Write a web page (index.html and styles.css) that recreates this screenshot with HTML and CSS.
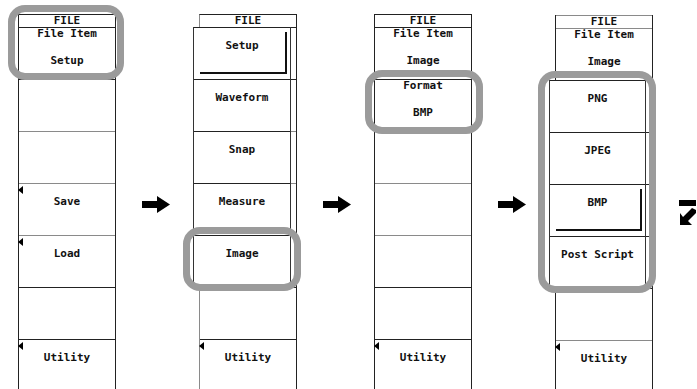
FILE: index.html
```html
<!DOCTYPE html>
<html>
  <head>
    <title>FILE menu - Image format</title>
    <link rel="stylesheet" href="styles.css">
  </head>
  <body>
    <div class="stage">
      <!-- step 1: top FILE menu -->
      <div class="panel">
        <div class="head">FILE</div>
        <div class="cell pair"><span>File Item</span><span>Setup</span></div>
        <div class="cell"></div>
        <div class="cell soft"></div>
        <div class="cell soft mark">Save</div>
        <div class="cell soft mark">Load</div>
        <div class="cell"></div>
        <div class="cell mark">Utility</div>
        <div class="ring ring-1"></div>
      </div>

      <div class="link link-wide">
        <svg class="arrow" width="28" height="17" viewBox="0 0 28 17">
          <rect x="0" y="5" width="17" height="7" fill="#000" />
          <polygon points="15,0 28,8.5 15,17" fill="#000" />
        </svg>
      </div>

      <!-- step 2: file item popup -->
      <div class="panel dim">
        <div class="head">FILE</div>
        <div class="cell"></div>
        <div class="cell"></div>
        <div class="cell soft"></div>
        <div class="cell soft"></div>
        <div class="cell soft"></div>
        <div class="cell"></div>
        <div class="cell mark">Utility</div>
        <div class="popup popup-items">
          <div class="cell pressed">Setup</div>
          <div class="cell">Waveform</div>
          <div class="cell">Snap</div>
          <div class="cell">Measure</div>
          <div class="cell">Image</div>
        </div>
        <div class="ring ring-2"></div>
      </div>

      <div class="link link-narrow">
        <svg class="arrow" width="28" height="17" viewBox="0 0 28 17">
          <rect x="0" y="5" width="17" height="7" fill="#000" />
          <polygon points="15,0 28,8.5 15,17" fill="#000" />
        </svg>
      </div>

      <!-- step 3: image menu -->
      <div class="panel">
        <div class="head">FILE</div>
        <div class="cell pair"><span>File Item</span><span>Image</span></div>
        <div class="cell pair"><span>Format</span><span>BMP</span></div>
        <div class="cell soft"></div>
        <div class="cell soft"></div>
        <div class="cell soft"></div>
        <div class="cell"></div>
        <div class="cell mark">Utility</div>
        <div class="ring ring-3"></div>
      </div>

      <div class="link link-wide">
        <svg class="arrow" width="28" height="17" viewBox="0 0 28 17">
          <rect x="0" y="5" width="17" height="7" fill="#000" />
          <polygon points="15,0 28,8.5 15,17" fill="#000" />
        </svg>
      </div>

      <!-- step 4: format popup -->
      <div class="panel low">
        <div class="head soft-head">FILE</div>
        <div class="cell pair soft"><span>File Item</span><span>Image</span></div>
        <div class="cell"></div>
        <div class="cell"></div>
        <div class="cell"></div>
        <div class="cell"></div>
        <div class="cell"></div>
        <div class="cell soft mark">Utility</div>
        <div class="popup popup-formats">
          <div class="cell">PNG</div>
          <div class="cell">JPEG</div>
          <div class="cell pressed">BMP</div>
          <div class="cell">Post Script</div>
        </div>
        <div class="ring ring-4"></div>
      </div>

      <div class="tail">
        <svg width="17" height="26" viewBox="0 0 17 26">
          <rect x="0" y="0" width="17" height="6" fill="#000" />
          <polygon points="17,10 13,8 4,17 1,13 1,25 13,25 9,21 17,13" fill="#000" />
        </svg>
      </div>
    </div>
  </body>
</html>
```

FILE: styles.css
```css
body {
  margin: 0;
  height: 389px;
  overflow: hidden;
  background-color: #fff;
  color: #111;
  font-family: "DejaVu Sans Mono", "Liberation Mono", monospace;
  font-size: 11px;
  font-weight: bold;
}

.stage {
  display: flex;
  align-items: flex-start;
  padding: 14px 0 0 18px;
}

.panel {
  position: relative;
  flex: none;
  width: 98px;
  box-sizing: border-box;
  border: 1px solid #222;
  border-bottom: none;
  background-color: #fff;
}

.panel.dim {
  border-left-color: #8a8a8a;
}

.panel.low {
  margin-top: 1px;
}

.head {
  height: 12px;
  line-height: 12px;
  text-align: center;
}

.soft-head {
  box-shadow: 0 -1px 0 #8a8a8a;
}

.cell {
  position: relative;
  height: 52px;
  box-sizing: border-box;
  border-top: 1px solid #222;
  padding-top: 12px;
  line-height: 12px;
  text-align: center;
  white-space: nowrap;
}

.cell.soft {
  border-top-color: #8a8a8a;
}

.cell.pair {
  display: flex;
  flex-direction: column;
  align-items: center;
  gap: 15px;
  padding-top: 0;
}

/* small soft-key marker in the top-left corner */
.cell.mark::before {
  content: "";
  position: absolute;
  left: -1px;
  top: 2px;
  border-right: 5px solid #000;
  border-top: 4px solid transparent;
  border-bottom: 4px solid transparent;
}

.cell.pressed::after {
  content: "";
  position: absolute;
  left: 6px;
  top: 4px;
  right: 3px;
  bottom: 5px;
  border-right: 2px solid #111;
  border-bottom: 2px solid #111;
}

.popup {
  position: absolute;
  box-sizing: border-box;
  border: 1px solid #333;
  border-top: none;
  background-color: #fff;
  z-index: 1;
}

.popup-items {
  left: -7px;
  top: 12px;
  width: 98px;
}

.popup-formats {
  left: -7px;
  top: 64px;
  width: 97px;
}

.ring {
  position: absolute;
  box-sizing: border-box;
  border: 7px solid #9b9b9b;
  border-radius: 17px;
  z-index: 2;
}

.ring-1 {
  left: -11px;
  top: -10px;
  width: 116px;
  height: 75px;
}

.ring-2 {
  left: -17px;
  top: 212px;
  width: 118px;
  height: 64px;
}

.ring-3 {
  left: -10px;
  top: 55px;
  width: 118px;
  height: 64px;
}

.ring-4 {
  left: -18px;
  top: 55px;
  width: 118px;
  height: 222px;
}

.link {
  flex: none;
  box-sizing: border-box;
  padding-left: 26px;
}

.link-wide {
  width: 83px;
}

.link-narrow {
  width: 77px;
}

.arrow {
  display: block;
  margin-top: 182px;
}

.tail {
  flex: none;
  padding: 186px 0 0 26px;
}

.tail svg {
  display: block;
}
```
